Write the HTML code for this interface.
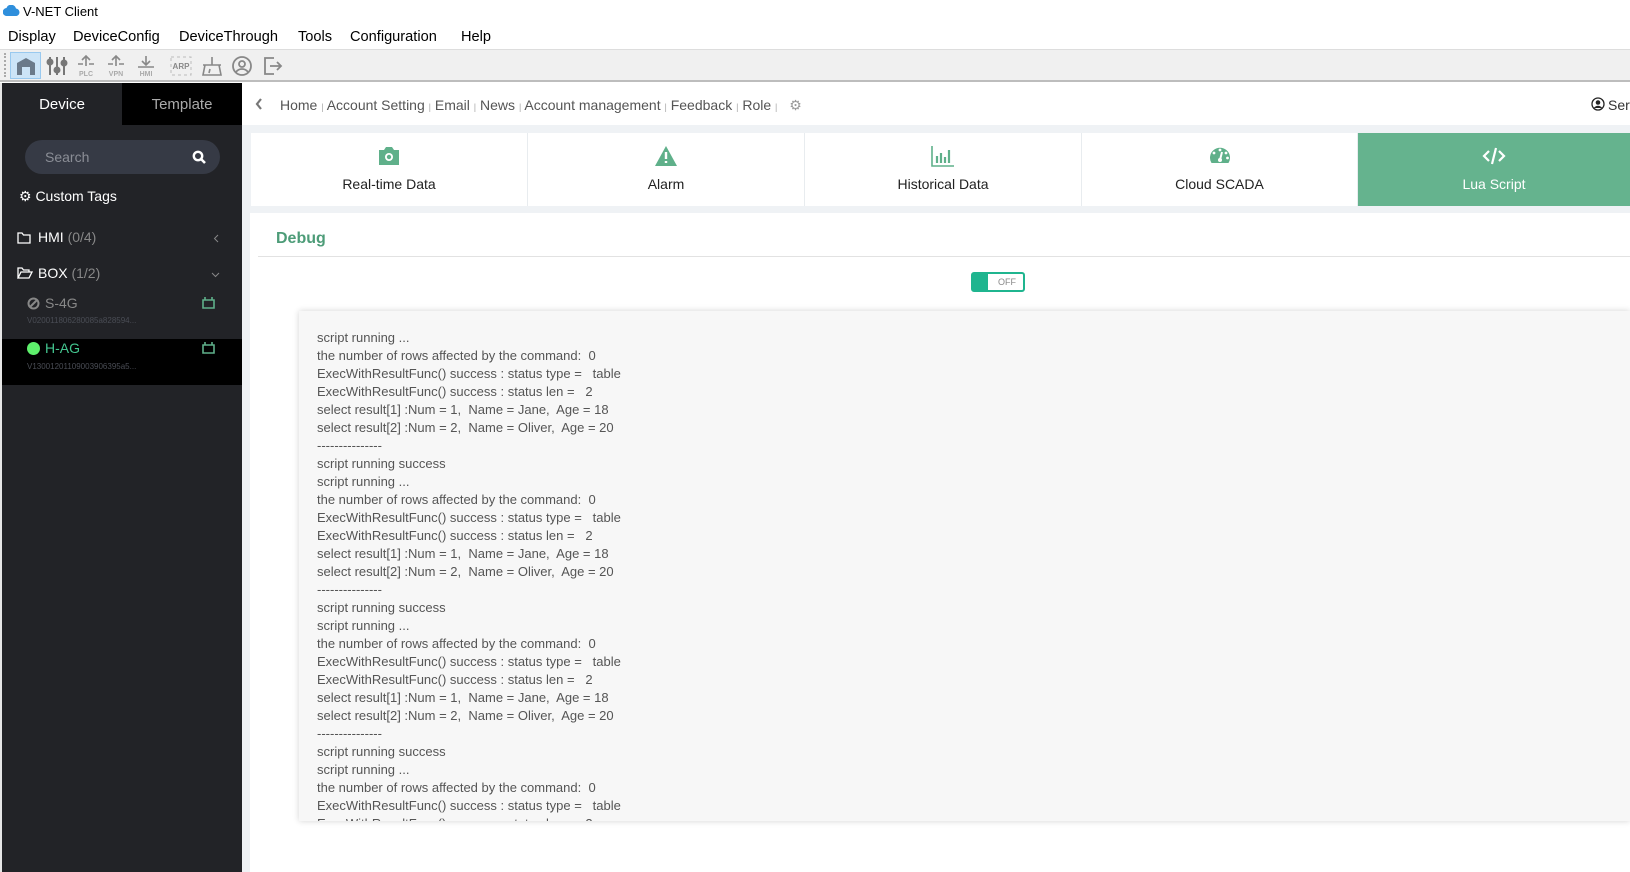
<!DOCTYPE html>
<html><head><meta charset="utf-8"><style>
*{margin:0;padding:0;box-sizing:border-box}
body{width:1630px;height:872px;overflow:hidden;background:#fff;font-family:"Liberation Sans",Arial,sans-serif;position:relative}
.abs{position:absolute}
#title{top:0;left:0;width:1630px;height:23px;background:#fff;font-size:13px;color:#000}
#menu{top:23px;left:0;width:1630px;height:26px;font-size:14.6px;color:#000}
#menu span{position:absolute;top:6px}
#tool{top:49px;left:0;width:1630px;height:33px;background:#f0f0f0;border-top:1px solid #ddd;border-bottom:2px solid #bdbdbd}
#side{top:83px;left:0;width:242px;height:789px;background:#222327;border-left:2px solid #e6e6e6}
.tab{position:absolute;top:0;height:42px;line-height:44px;text-align:center;font-size:15px}
#crumb{top:83px;left:242px;width:1388px;height:42px;background:#fff;font-size:14px;color:#555}
#gray{top:125px;left:242px;width:1388px;height:747px;background:#eff2f5}
.t{position:absolute;top:133px;height:73px;background:#fff;text-align:center;font-size:14px;color:#222;border-right:1px solid #e8ecef}
.t .lbl{position:absolute;top:43px;left:0;right:0}
.t svg{position:absolute;top:12px;left:50%;margin-left:-12px}
#panel{top:213px;left:250px;width:1380px;height:659px;background:#fff}
#log{top:311px;left:299px;width:1331px;height:510px;background:#f7f7f7;box-shadow:0 0 6px rgba(0,0,0,.18);overflow:hidden;padding:18px 0 0 18px;font-size:13px;line-height:18px;color:#555;white-space:pre}
</style></head><body>
<div id="title" class="abs"><svg class="abs" style="left:3px;top:5px" width="17" height="11" viewBox="0 0 17 11"><path d="M4 11a4 4 0 0 1-.5-8A5 5 0 0 1 13 3.5 3.8 3.8 0 0 1 13.5 11z" fill="#2f8fdc"/></svg><span class="abs" style="left:23px;top:4px">V-NET Client</span></div>
<div id="menu" class="abs"><span style="left:8px">Display</span><span style="left:73px">DeviceConfig</span><span style="left:179px">DeviceThrough</span><span style="left:298px">Tools</span><span style="left:350px">Configuration</span><span style="left:461px">Help</span></div>
<div id="tool" class="abs">
<div class="abs" style="left:4px;top:3px;width:2px;height:24px;border-left:2px dotted #aaa"></div>
<div class="abs" style="left:10px;top:2px;width:31px;height:27px;background:#cce4f7;border:1px solid #99c9ef"></div>
<svg class="abs" style="left:15px;top:6px" width="22" height="20" viewBox="0 0 22 20"><path d="M2 19V7l9-5 9 5v12h-5v-8H7v8z" fill="#6b7a8a"/></svg>
<svg class="abs" style="left:46px;top:5px" width="22" height="22" viewBox="0 0 22 22" stroke="#777" stroke-width="2" fill="#777"><path d="M4 2v18M11 2v18M18 2v18"/><circle cx="4" cy="7" r="2.5"/><circle cx="11" cy="15" r="2.5"/><circle cx="18" cy="8" r="2.5"/></svg>
<svg class="abs" style="left:75px;top:4px" width="22" height="24" viewBox="0 0 22 24"><path d="M11 2v10M7 6l4-4 4 4M3 10h5M14 10h5" stroke="#888" stroke-width="1.6" fill="none"/><text x="11" y="22" font-size="7" text-anchor="middle" fill="#aaa" font-family="Liberation Sans" font-weight="bold">PLC</text></svg>
<svg class="abs" style="left:105px;top:4px" width="22" height="24" viewBox="0 0 22 24"><path d="M11 2v10M7 6l4-4 4 4M3 10h5M14 10h5" stroke="#888" stroke-width="1.6" fill="none"/><text x="11" y="22" font-size="7" text-anchor="middle" fill="#aaa" font-family="Liberation Sans" font-weight="bold">VPN</text></svg>
<svg class="abs" style="left:135px;top:4px" width="22" height="24" viewBox="0 0 22 24"><path d="M11 2v9M7 7l4 4 4-4M3 13h16" stroke="#888" stroke-width="1.6" fill="none"/><text x="11" y="22" font-size="7" text-anchor="middle" fill="#aaa" font-family="Liberation Sans" font-weight="bold">HMI</text></svg>
<svg class="abs" style="left:170px;top:6px" width="22" height="20" viewBox="0 0 22 20"><rect x="1" y="1" width="20" height="18" fill="none" stroke="#bbb" stroke-dasharray="3 3"/><text x="11" y="13" font-size="8" text-anchor="middle" fill="#888" font-family="Liberation Sans" font-weight="bold">ARP</text></svg>
<svg class="abs" style="left:201px;top:5px" width="22" height="22" viewBox="0 0 22 22" stroke="#888" stroke-width="1.6" fill="none"><path d="M11 2v8M2 10h18M4 10l-2 10h18l-2-10M9 14l-1 4"/></svg>
<svg class="abs" style="left:231px;top:5px" width="22" height="22" viewBox="0 0 22 22" stroke="#888" stroke-width="1.8" fill="none"><circle cx="11" cy="11" r="9"/><circle cx="11" cy="9" r="3"/><path d="M5 17c3-4 9-4 12 0"/></svg>
<svg class="abs" style="left:262px;top:5px" width="22" height="22" viewBox="0 0 22 22" stroke="#888" stroke-width="1.8" fill="none"><path d="M12 3H3v16h9"/><path d="M8 11h11M15 7l4 4-4 4" fill="none"/></svg>
</div>
<div id="side" class="abs">
<div class="tab" style="left:0;width:120px;background:#222327;color:#fff">Device</div>
<div class="tab" style="left:120px;width:120px;background:#000;color:#aaa">Template</div>
<div class="abs" style="left:23px;top:57px;width:195px;height:34px;border-radius:17px;background:#363a45;color:#8b8e96;font-size:14px;line-height:34px;padding-left:20px">Search
<svg class="abs" style="right:14px;top:10px" width="14" height="14" viewBox="0 0 14 14"><circle cx="6" cy="6" r="4.2" stroke="#fff" stroke-width="2.4" fill="none"/><path d="M9 9l4 4" stroke="#fff" stroke-width="2.6"/></svg></div>
<div class="abs" style="left:17px;top:105px;color:#fff;font-size:14px">⚙ Custom Tags</div>
<svg class="abs" style="left:15px;top:149px" width="14" height="12" viewBox="0 0 14 12"><path d="M1 1h4l1.5 2H13v8H1z" stroke="#fff" stroke-width="1.3" fill="none"/></svg>
<div class="abs" style="left:36px;top:146px;color:#fff;font-size:14px">HMI <span style="color:#888">(0/4)</span></div>
<svg class="abs" style="left:211px;top:151px" width="6" height="9" viewBox="0 0 6 9"><path d="M5 1L1.5 4.5 5 8" stroke="#888" fill="none"/></svg>
<svg class="abs" style="left:15px;top:184px" width="16" height="12" viewBox="0 0 16 12"><path d="M1 11V1h4l1.5 2H12v2M1 11l3-6h11l-3 6z" stroke="#fff" stroke-width="1.3" fill="none"/></svg>
<div class="abs" style="left:36px;top:182px;color:#fff;font-size:14px">BOX <span style="color:#888">(1/2)</span></div>
<svg class="abs" style="left:209px;top:189px" width="9" height="6" viewBox="0 0 9 6"><path d="M1 1l3.5 3.5L8 1" stroke="#888" fill="none"/></svg>
<svg class="abs" style="left:25px;top:214px" width="13" height="13" viewBox="0 0 13 13"><circle cx="6.5" cy="6.5" r="5" stroke="#888" stroke-width="2" fill="none"/><path d="M3 10l7-7" stroke="#888" stroke-width="2"/></svg>
<div class="abs" style="left:43px;top:212px;color:#888;font-size:14px">S-4G</div>
<div class="abs" style="left:25px;top:233px;color:#4a4d55;font-size:8px">V020011806280085a828594...</div>
<svg class="abs" style="left:200px;top:214px" width="13" height="12" viewBox="0 0 13 12"><path d="M1 3h11v8H1zM3 3V0M10 3V0" stroke="#5fb08a" stroke-width="1.6" fill="none"/></svg>
<div class="abs" style="left:0;top:256px;width:240px;height:46px;background:#000"></div>
<div class="abs" style="left:25px;top:259px;width:13px;height:13px;border-radius:50%;background:#5ef06c"></div>
<div class="abs" style="left:43px;top:257px;color:#43c68f;font-size:14px">H-AG</div>
<div class="abs" style="left:25px;top:279px;color:#4a4d55;font-size:8px">V13001201109003906395a5...</div>
<svg class="abs" style="left:200px;top:259px" width="13" height="12" viewBox="0 0 13 12"><path d="M1 3h11v8H1zM3 3V0M10 3V0" stroke="#5fb08a" stroke-width="1.6" fill="none"/></svg>
</div>
<div id="crumb" class="abs">
<svg class="abs" style="left:13px;top:15px" width="8" height="12" viewBox="0 0 8 12"><path d="M6 1L2 6l4 5" stroke="#777" stroke-width="2.2" fill="none"/></svg>
<div class="abs" style="left:38px;top:14px;white-space:nowrap">Home <span style="font-size:9px;color:#aaa">|</span> Account Setting <span style="font-size:9px;color:#aaa">|</span> Email <span style="font-size:9px;color:#aaa">|</span> News <span style="font-size:9px;color:#aaa">|</span> Account management <span style="font-size:9px;color:#aaa">|</span> Feedback <span style="font-size:9px;color:#aaa">|</span> Role <span style="font-size:9px;color:#aaa">|</span> <span style="color:#999;margin-left:8px">⚙</span></div>
<svg class="abs" style="left:1349px;top:14px" width="14" height="14" viewBox="0 0 14 14"><circle cx="7" cy="7" r="6" stroke="#222" stroke-width="1.3" fill="none"/><circle cx="7" cy="5.5" r="2.3" fill="#222"/><path d="M2.8 11c2-3 6.4-3 8.4 0" fill="#222"/></svg>
<div class="abs" style="left:1366px;top:14px;color:#333">Serv</div>
</div>
<div id="gray" class="abs"></div>
<div class="t" style="left:251px;width:277px"><svg width="24" height="22" viewBox="0 0 24 22"><path d="M2 5h5l2-3h6l2 3h5v15H2z" fill="#5fb08a"/><circle cx="12" cy="12" r="4" fill="#fff"/><circle cx="12" cy="12" r="2.2" fill="#5fb08a"/></svg><div class="lbl">Real-time Data</div></div>
<div class="t" style="left:528px;width:277px"><svg width="24" height="22" viewBox="0 0 24 22"><path d="M12 1l11 20H1z" fill="#5fb08a"/><path d="M12 7v7M12 16v2" stroke="#fff" stroke-width="2.4"/></svg><div class="lbl">Alarm</div></div>
<div class="t" style="left:805px;width:277px"><svg width="24" height="22" viewBox="0 0 24 22"><path d="M1 1v20h22" stroke="#5fb08a" stroke-width="1.6" fill="none"/><path d="M6 11v7M10 8v10M14 12v6M18 5v13" stroke="#5fb08a" stroke-width="2.2"/></svg><div class="lbl">Historical Data</div></div>
<div class="t" style="left:1082px;width:276px"><svg width="24" height="22" viewBox="0 0 24 22"><path d="M3.5 18A10 10 0 1 1 20.5 18Z" fill="#5fb08a"/><circle cx="12" cy="5" r="1.4" fill="#fff"/><circle cx="6" cy="8" r="1.4" fill="#fff"/><circle cx="18" cy="8" r="1.4" fill="#fff"/><circle cx="19.5" cy="13" r="1.4" fill="#fff"/><path d="M14 7l-2 8" stroke="#fff" stroke-width="2"/><circle cx="12" cy="15" r="2" fill="#fff"/></svg><div class="lbl">Cloud SCADA</div></div>
<div class="t" style="left:1358px;width:272px;background:#65b38e;color:#fff;border:none"><svg width="24" height="22" viewBox="0 0 24 22"><path d="M7 6l-5 5 5 5M17 6l5 5-5 5M14 3l-4 16" stroke="#fff" stroke-width="2.2" fill="none"/></svg><div class="lbl">Lua Script</div></div>
<div id="panel" class="abs">
<div class="abs" style="left:26px;top:17px;font-size:16px;font-weight:bold;color:#4d9c78">Debug</div>
<div class="abs" style="left:8px;top:43px;width:1372px;height:1px;background:#e2e2e2"></div>
<div class="abs" style="left:721px;top:59px;width:54px;height:20px;border:2px solid #1fb58f;border-radius:3px;background:#fff">
<div class="abs" style="left:0;top:0;width:15px;height:16px;background:#1fb58f"></div>
<div class="abs" style="left:25px;top:3px;font-size:9px;color:#888">OFF</div></div>
</div>
<div id="log" class="abs">script running ...
the number of rows affected by the command:  0
ExecWithResultFunc() success : status type =   table
ExecWithResultFunc() success : status len =   2
select result[1] :Num = 1,  Name = Jane,  Age = 18
select result[2] :Num = 2,  Name = Oliver,  Age = 20
---------------
script running success
script running ...
the number of rows affected by the command:  0
ExecWithResultFunc() success : status type =   table
ExecWithResultFunc() success : status len =   2
select result[1] :Num = 1,  Name = Jane,  Age = 18
select result[2] :Num = 2,  Name = Oliver,  Age = 20
---------------
script running success
script running ...
the number of rows affected by the command:  0
ExecWithResultFunc() success : status type =   table
ExecWithResultFunc() success : status len =   2
select result[1] :Num = 1,  Name = Jane,  Age = 18
select result[2] :Num = 2,  Name = Oliver,  Age = 20
---------------
script running success
script running ...
the number of rows affected by the command:  0
ExecWithResultFunc() success : status type =   table
ExecWithResultFunc() success : status len =   2</div>
</body></html>
